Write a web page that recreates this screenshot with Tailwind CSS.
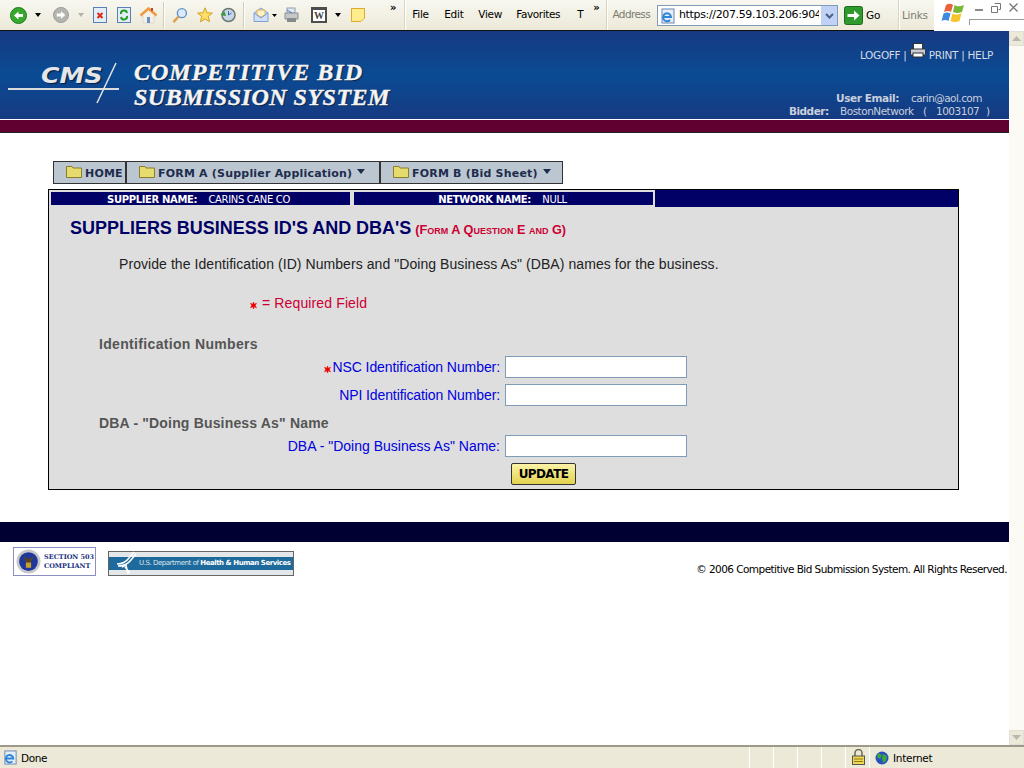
<!DOCTYPE html>
<html><head><meta charset="utf-8"><title>Competitive Bid Submission System</title>
<script src="https://cdn.jsdelivr.net/npm/@tailwindcss/browser@4"></script></head>
<body class="w-[1024px] h-[768px] overflow-hidden bg-white font-['Liberation_Sans',sans-serif]">
<div class="flex flex-col h-[768px]">
<!-- toolbar -->
<div class="h-[31px] shrink-0 flex items-center bg-[linear-gradient(180deg,#f8f7f0,#ece9d8)] border-b border-[#111] relative font-['DejaVu_Sans',sans-serif] text-[10.5px] text-black tracking-[-0.25px]">
  <svg class="ml-[10px]" width="17" height="17" viewBox="0 0 17 17"><circle cx="8.5" cy="8.5" r="8" fill="#39a82f" stroke="#1f7a1d"/><path d="M4 8.5 8.5 4.5V7H13V10H8.5V12.5Z" fill="#fff"/></svg>
  <svg class="ml-[8px]" width="6" height="4"><path d="M0 0H6L3 4Z" fill="#000"/></svg>
  <svg class="ml-[12px]" width="16" height="16" viewBox="0 0 17 17"><circle cx="8.5" cy="8.5" r="8" fill="#b5b5b0" stroke="#999"/><path d="M13 8.5 8.5 4.5V7H4V10H8.5V12.5Z" fill="#fff"/></svg>
  <svg class="ml-[9px]" width="6" height="4"><path d="M0 0H6L3 4Z" fill="#b4b4ac"/></svg>
  <svg class="ml-[9px]" width="14" height="16" viewBox="0 0 14 16"><rect x=".5" y=".5" width="13" height="15" fill="#e4edfa" stroke="#5a7fb5"/><path d="M4.5 6 9.5 11M9.5 6 4.5 11" stroke="#e02b14" stroke-width="2"/></svg>
  <svg class="ml-[10px]" width="14" height="16" viewBox="0 0 14 16"><rect x=".5" y=".5" width="13" height="15" fill="#e4edfa" stroke="#5a7fb5"/><path d="M4 7A3 3 0 0 1 10 6M10 9A3 3 0 0 1 4 10" stroke="#24a024" stroke-width="2" fill="none"/></svg>
  <svg class="ml-[9px]" width="17" height="17" viewBox="0 0 17 17"><path d="M1 8 8.5 1.5 16 8V9H14V16H3V9H1Z" fill="#f3f0e8" stroke="#c9c6c0" stroke-width=".5"/><path d="M.5 8.5 8.5 1.5 16.5 8.5" fill="none" stroke="#ef9a3c" stroke-width="2.5"/><rect x="7" y="10" width="3" height="6" fill="#6d8fc5"/><rect x="11" y="1" width="2" height="3" fill="#c8452c"/></svg>
  <div class="ml-[6px] w-[2px] h-[26px] bg-[#cfccb8] border-r border-white"></div>
  <svg class="ml-[7px]" width="16" height="17" viewBox="0 0 17 17"><circle cx="10.5" cy="6" r="4.8" fill="#dceafa" stroke="#5f93c9" stroke-width="1.5"/><path d="M7 9.5 1.5 15.5" stroke="#d8a04a" stroke-width="2.5"/></svg>
  <svg class="ml-[9px]" width="16" height="16" viewBox="0 0 16 16"><path d="M8 .8 10 5.8 15.4 6.1 11.2 9.4 12.6 14.8 8 11.9 3.4 14.8 4.8 9.4.6 6.1 6 5.8Z" fill="#ffe066" stroke="#d6a21e"/></svg>
  <svg class="ml-[7px]" width="16" height="16" viewBox="0 0 16 16"><circle cx="8.5" cy="8" r="6.5" fill="#c8d6e6" stroke="#6b7a73" stroke-width="1.5"/><path d="M8.5 4V8L11.5 6" stroke="#2f6db0" fill="none"/><path d="M.5 8 4.5 4.5 6 9Z" fill="#2e9a35"/></svg>
  <div class="ml-[7px] w-[2px] h-[26px] bg-[#cfccb8] border-r border-white"></div>
  <svg class="ml-[8px]" width="16" height="16" viewBox="0 0 16 16"><path d="M1 6 8 1 15 6V14.5H1Z" fill="#cfe0fa" stroke="#7e9fd6"/><path d="M4 3H12V8L8 10 4 8Z" fill="#fff3c4" stroke="#e0b060"/><path d="M1 6 8 11 15 6" fill="none" stroke="#7e9fd6"/></svg>
  <svg class="ml-[3px] mt-[1px]" width="5" height="3"><path d="M0 0H5L2.5 3Z" fill="#000"/></svg>
  <svg class="ml-[7px]" width="15" height="16" viewBox="0 0 15 16"><rect x="3" y="1" width="8" height="5" fill="#dfe7f4" stroke="#8ea0b8"/><path d="M1 6H14V12H1Z" fill="#c4c8c8" stroke="#8a8f90"/><rect x="3" y="11" width="9" height="4" fill="#858a8a"/><path d="M3 3 8 6" stroke="#5c7fb0"/></svg>
  <div class="ml-[12px] w-[16px] h-[16px] bg-[#4d4d4d] flex items-center justify-center"><span class="w-[12px] h-[11px] bg-white text-[10px] leading-[11px] font-bold text-center text-[#444] font-['Liberation_Serif',serif] tracking-normal">W</span></div>
  <svg class="ml-[8px]" width="6" height="4"><path d="M0 0H6L3 4Z" fill="#000"/></svg>
  <svg class="ml-[10px]" width="14" height="14" viewBox="0 0 14 14"><path d="M.5.5H13.5V10L10 13.5H.5Z" fill="#ffed8c" stroke="#e0a92c"/></svg>
  <span class="ml-[25px] mb-[15px] text-[10px] font-bold leading-none">&#187;</span>
  <div class="ml-[8px] w-[2px] h-[30px] bg-[#d8d5c2] border-r border-white"></div>
  <span class="ml-[6px] w-[32px]">File</span><span class="w-[34px]">Edit</span><span class="w-[38px]">View</span><span class="w-[61px] tracking-[-0.4px]">Favorites</span><span class="w-[16px]">T</span>
  <span class="mb-[15px] text-[10px] font-bold leading-none">&#187;</span>
  <div class="ml-[7px] w-[2px] h-[30px] bg-[#d8d5c2] border-r border-white"></div>
  <span class="ml-[4px] text-[#7d7d72] tracking-[-0.6px]">Address</span>
  <div class="absolute left-[657px] top-[5px] w-[181px] h-[21px] bg-white border border-[#7f9db9] flex items-center overflow-hidden">
    <svg class="ml-[2px] shrink-0" width="16" height="16" viewBox="0 0 16 16"><rect x="2" y="1" width="12" height="14" fill="#e6eefa" stroke="#6d84b0"/><path d="M3.5 9H11A4 4 0 1 0 10 12" stroke="#2f86d6" stroke-width="2" fill="none"/></svg>
    <span class="ml-[3px] w-[140px] overflow-hidden whitespace-nowrap text-[11px] tracking-[-0.35px]">https://207.59.103.206:9045</span>
    <div class="absolute right-0 top-0 w-[16px] h-[19px] bg-[#c1d2f7] flex items-center justify-center"><svg width="9" height="6" viewBox="0 0 9 6"><path d="M1 1 4.5 4.5 8 1" stroke="#4d6185" stroke-width="2" fill="none"/></svg></div>
  </div>
  <svg class="absolute left-[844px] top-[6px]" width="19" height="19" viewBox="0 0 19 19"><rect x=".5" y=".5" width="18" height="18" rx="2" fill="#2f9a2c" stroke="#1c6e1c"/><path d="M3.5 8H10V4.5L15.5 9.5 10 14.500V11H3.500Z" fill="#fff"/></svg>
  <span class="absolute left-[866px] top-[8px]">Go</span>
  <div class="absolute left-[898px] top-0 w-[2px] h-[30px] bg-[#d8d5c2] border-r border-white"></div>
  <span class="absolute left-[902px] top-[8px] text-[#7d7d72]">Links</span>
  <div class="absolute left-[934px] top-0 w-[90px] h-[31px] bg-white">
    <svg class="absolute left-[7px] top-[2px]" width="25" height="22" viewBox="0 0 25 22"><path d="M5 3Q9 .5 12 3L10 10Q7 8 3 10Z" fill="#e8613a"/><path d="M13.500 3Q17 5.500 23 3L21 10Q16 12 12 10Z" fill="#7ab833"/><path d="M2.500 11.500Q6 9.500 9.500 11.500L7.500 19Q4 17 .5 19Z" fill="#3d8ae0"/><path d="M11.500 11.500Q15 13.500 20.500 11.500L18.500 19Q14 21 9.500 19Z" fill="#f7c32c"/></svg>
    <div class="absolute left-[41px] top-[9px] w-[8px] h-[2px] bg-[#8a8a8a]"></div>
    <svg class="absolute left-[57px] top-[3px]" width="10" height="10" viewBox="0 0 10 10"><path d="M3.500.5H9.500V6.500H7.500M.5 3.500H6.500V9.500H.5Z" fill="none" stroke="#777"/></svg>
    <svg class="absolute left-[75px] top-[3px]" width="9" height="9" viewBox="0 0 9 9"><path d="M.5.5 8.500 8.500M8.500.5 .5 8.500" stroke="#777" stroke-width="1.300"/></svg>
    <div class="absolute left-[35px] top-[19px] w-[55px] h-[6px] border-l border-t border-[#999] bg-white"></div>
  </div>
</div>
<div class="flex flex-1 min-h-0">
<!-- page -->
<div class="w-[1009px] shrink-0 flex flex-col">
  <header class="h-[88px] shrink-0 relative bg-[linear-gradient(180deg,#163a82,#0a4b93_50%,#163a82)]">
    <div class="absolute left-[8px] top-[31px] w-[112px] h-[42px]">
      <span class="absolute left-[33px] top-[0px] text-[21px] leading-[28px] font-bold italic text-[#e4e6ea] font-['DejaVu_Sans',sans-serif] scale-x-[1.2] origin-left [text-shadow:1px_1px_1px_#0a1c40]">CMS</span>
      <div class="absolute left-0 top-[26px] w-[111px] h-[2px] bg-[#dcdcdc]"></div>
      <svg class="absolute left-[85px] top-[0px]" width="26" height="42" viewBox="0 0 26 42"><path d="M23 1 4 41" stroke="#e4e4e4" stroke-width="1.500"/></svg>
    </div>
    <div class="absolute left-[134px] top-[29px] text-[24px] leading-[25px] font-bold italic text-[#f4f4f4] font-['Liberation_Serif',serif] [text-shadow:1px_1px_1px_#0a1c40] [-webkit-text-stroke:0.4px_#f4f4f4] whitespace-nowrap"><span class="tracking-[1px]">COMPETITIVE BID</span><br><span class="tracking-[0.5px]">SUBMISSION SYSTEM</span></div>
    <div class="absolute right-[16px] top-[17px] flex items-center text-[10.5px] text-[#d6dbe6] font-['DejaVu_Sans',sans-serif] tracking-[-0.3px] whitespace-nowrap">LOGOFF&nbsp;|&nbsp;
      <svg class="-translate-y-[5px]" width="16" height="15" viewBox="0 0 16 15"><rect x="3.500" y=".5" width="9" height="6" fill="#fff" stroke="#333"/><rect x=".5" y="6" width="15" height="6" rx="1" fill="#c8ccd6" stroke="#333"/><rect x="3" y="10" width="10" height="4" fill="#fff" stroke="#333"/></svg>
      &nbsp;PRINT&nbsp;|&nbsp;HELP</div>
    <div class="absolute left-[836px] top-[61px] text-[10.5px] leading-[13px] text-[#c9cfdd] font-['DejaVu_Sans',sans-serif] tracking-[-0.4px] whitespace-nowrap"><b>User Email:</b><span class="ml-[12px] tracking-[-0.55px]">carin@aol.com</span></div>
    <div class="absolute left-[789px] top-[74px] flex text-[10.5px] leading-[13px] text-[#c9cfdd] font-['DejaVu_Sans',sans-serif] tracking-[-0.5px] whitespace-nowrap"><b class="w-[51px]">Bidder:</b><span class="w-[83px]">BostonNetwork</span><span class="w-[13px]">(</span><span class="w-[50px]">1003107</span><span>)</span></div>
  </header>
  <div class="h-px bg-white shrink-0"></div>
  <div class="h-[13px] bg-[#600030] border-b border-[#222] shrink-0"></div>
  <!-- menu -->
  <nav class="ml-[53px] mt-[28px] w-[510px] h-[23px] shrink-0 flex bg-[#bcc6d0] border border-[#333] font-['DejaVu_Sans',sans-serif] text-[11px] font-bold text-[#1c2d4d] tracking-[0.2px]">
    <div class="w-[73px] flex items-center border-r-2 border-[#333]"><svg class="ml-[12px] mr-[3px] mb-[2px]" width="16" height="13" viewBox="0 0 16 13"><path d="M.5 12.500V1.500H6L7 3H15.500V12.500Z" fill="#e6dc6e" stroke="#8a7d2c"/></svg><span class="mt-[4px]">HOME</span></div>
    <div class="w-[254px] flex items-center border-r-2 border-[#333]"><svg class="ml-[12px] mr-[3px] mb-[2px]" width="16" height="13" viewBox="0 0 16 13"><path d="M.5 12.500V1.500H6L7 3H15.500V12.500Z" fill="#e6dc6e" stroke="#8a7d2c"/></svg><span class="mt-[4px]">FORM A (Supplier Application)</span><svg class="ml-[5px] mb-[2px]" width="8" height="5"><path d="M0 0H8L4 5Z" fill="#1c2d4d"/></svg></div>
    <div class="flex items-center"><svg class="ml-[12px] mr-[3px] mb-[2px]" width="16" height="13" viewBox="0 0 16 13"><path d="M.5 12.500V1.500H6L7 3H15.500V12.500Z" fill="#e6dc6e" stroke="#8a7d2c"/></svg><span class="mt-[4px]">FORM B (Bid Sheet)</span><svg class="ml-[5px] mb-[2px]" width="8" height="5"><path d="M0 0H8L4 5Z" fill="#1c2d4d"/></svg></div>
  </nav>
  <!-- panel -->
  <main class="ml-[48px] mt-[5px] w-[911px] h-[301px] shrink-0 bg-[#dedede] border border-black">
    <div class="h-[17px] flex items-start text-[10px] text-white font-['DejaVu_Sans',sans-serif] tracking-[-0.35px] leading-[15px] whitespace-pre">
      <div class="ml-[2px] mt-[2px] w-[299px] h-[13px] bg-[#000066] text-center pr-[4px]"><b>SUPPLIER NAME:</b>    CARINS CANE CO</div>
      <div class="ml-[4px] mt-[2px] w-[299px] h-[13px] bg-[#000066] text-center pr-[2px]"><b>NETWORK NAME:</b>    NULL</div>
      <div class="ml-[2px] flex-1 h-[17px] bg-[#000066]"></div>
    </div>
    <h1 class="ml-[21px] mt-[10px] h-[22px] flex items-baseline whitespace-nowrap"><span class="text-[18px] leading-[22px] font-bold text-[#000066] tracking-[-0.02px]">SUPPLIERS BUSINESS ID'S AND DBA'S</span><span class="ml-[4px] text-[12.7px] font-bold text-[#cc0033] [font-variant:small-caps]">(Form A Question E and G)</span></h1>
    <p class="ml-[70px] mt-[17px] text-[14px] leading-[17px] text-[#222] tracking-[0.065px]">Provide the Identification (ID) Numbers and "Doing Business As" (DBA) names for the business.</p>
    <p class="ml-[201px] mt-[21px] text-[14px] leading-[18px] text-[#cc0033] tracking-[0.13px] flex items-center"><svg class="mr-[5px] mt-[5px]" width="7" height="7" viewBox="0 0 7 7"><path d="M3.500 0 4.300 2.200 6.500 1.200 5.300 3.500 6.500 5.800 4.300 4.800 3.500 7 2.700 4.800.5 5.800 1.700 3.500.5 1.200 2.700 2.200Z" fill="#ee0000" stroke="#ee0000" stroke-width=".5"/></svg>= Required Field</p>
    <h2 class="ml-[50px] mt-[24px] h-[17px] text-[14px] leading-[17px] font-bold text-[#555] tracking-[0.33px]">Identification Numbers</h2>
    <div class="mt-[3px] h-[22px] flex items-center justify-end w-[638px]"><label class="text-[14px] text-[#0000e0] mr-[5px] flex items-center tracking-[-0.08px]"><svg class="mr-[1px] mt-[5px]" width="7" height="7" viewBox="0 0 7 7"><path d="M3.500 0 4.300 2.200 6.500 1.200 5.300 3.500 6.500 5.800 4.300 4.800 3.500 7 2.700 4.800.5 5.800 1.700 3.500.5 1.200 2.700 2.200Z" fill="#ee0000" stroke="#ee0000" stroke-width=".5"/></svg>NSC Identification Number:</label><input class="w-[182px] h-[22px] bg-white border border-[#7f9db9]"></div>
    <div class="mt-[6px] h-[22px] flex items-center justify-end w-[638px]"><label class="text-[14px] text-[#0000e0] mr-[5px] tracking-[-0.1px]">NPI Identification Number:</label><input class="w-[182px] h-[22px] bg-white border border-[#7f9db9]"></div>
    <h2 class="ml-[50px] mt-[9px] h-[17px] text-[14px] leading-[17px] font-bold text-[#555] tracking-[0.17px]">DBA - "Doing Business As" Name</h2>
    <div class="mt-[3px] h-[22px] flex items-center justify-end w-[638px]"><label class="text-[14px] text-[#0000e0] mr-[5px]">DBA - "Doing Business As" Name:</label><input class="w-[182px] h-[22px] bg-white border border-[#7f9db9]"></div>
    <button class="block ml-[462px] mt-[6px] w-[65px] h-[22px] rounded-[2px] border border-[#333] bg-[linear-gradient(180deg,#fbf3a8,#e2d24e)] text-[12px] font-bold text-black font-['DejaVu_Sans',sans-serif] tracking-[-0.6px]">UPDATE</button>
  </main>
  <div class="mt-[32px] h-[20px] shrink-0 bg-[#000033]"></div>
  <footer class="relative flex-1">
    <div class="absolute left-[13px] top-[5px] w-[83px] h-[29px] border border-[#8a8fc0] bg-white flex items-center">
      <svg class="ml-[2px]" width="25" height="25" viewBox="0 0 24 24"><circle cx="12" cy="12" r="11.500" fill="#c8c8cc"/><circle cx="12" cy="12" r="9" fill="#20389a"/><path d="M7 7 12 10 17 7 14 14H10Z" fill="#5a4420"/><rect x="9.500" y="13" width="5" height="5" fill="#c8a030"/></svg>
      <div class="ml-[3px] text-[6.5px] leading-[9px] font-bold text-[#203080] font-['DejaVu_Serif',serif] whitespace-nowrap">SECTION 503<br>COMPLIANT</div>
    </div>
    <div class="absolute left-[108px] top-[9px] w-[186px] h-[25px] border border-[#666] bg-[#e4e7ea] flex items-center">
      <div class="w-full h-[13px] bg-[#1f6a9c] flex items-center relative">
        <svg class="absolute left-[7px] top-[-6px]" width="22" height="24" viewBox="0 0 22 24"><path d="M1 13C7 13 10 11 13 7L18 1M2 15C8 15 12 13 15 9L20 3M6 16 10 14 12 23M9 16 14 22" stroke="#fff" stroke-width="1.500" fill="none"/></svg>
        <span class="ml-[30px] text-[7px] text-[#dbe6ee] whitespace-nowrap font-['DejaVu_Sans',sans-serif] tracking-[-0.45px]">U.S. Department of <b class="text-white">Health &amp; Human Services</b></span>
      </div>
    </div>
    <p class="absolute right-[2px] top-[20px] text-[10.5px] text-black font-['DejaVu_Sans',sans-serif] tracking-[-0.56px] whitespace-nowrap">© 2006 Competitive Bid Submission System. All Rights Reserved.</p>
  </footer>
</div>
<!-- scrollbar -->
<div class="w-[15px] bg-[#fbfaf5] flex flex-col justify-between">
  <div class="h-[15px] bg-[#ece9d8] border border-[#e0e0d8] flex items-center justify-center"><svg width="9" height="5"><path d="M0 5 4.500 0 9 5Z" fill="#b8b8b0"/></svg></div>
  <div class="h-[15px] bg-[#ece9d8] border border-[#e0e0d8] flex items-center justify-center"><svg width="9" height="5"><path d="M0 0 4.500 5 9 0Z" fill="#b8b8b0"/></svg></div>
</div>
</div>
<!-- status bar -->
<div class="h-[23px] shrink-0 border-t-2 border-[#9d9a89] bg-[#ece9d8] flex items-center relative font-['DejaVu_Sans',sans-serif] text-[10.5px] tracking-[-0.4px] text-black">
  <svg class="ml-[3px]" width="15" height="15" viewBox="0 0 16 16"><rect x="2" y="1" width="12" height="14" fill="#e6eefa" stroke="#6d84b0"/><path d="M3.500 9H11A4 4 0 1 0 10 12" stroke="#2f86d6" stroke-width="2" fill="none"/></svg>
  <span class="ml-[3px] mt-[2px]">Done</span>
  <div class="absolute left-[749px] top-[0px] h-[21px] flex">
    <i class="w-[24px] border-l border-white"></i><i class="w-[24px] border-l border-white"></i><i class="w-[24px] border-l border-white"></i><i class="w-[24px] border-l border-white"></i><i class="w-[24px] border-l border-white"></i><i class="w-[24px] border-l border-white"></i>
  </div>
  <svg class="absolute left-[852px] top-[2px]" width="13" height="16" viewBox="0 0 13 16"><path d="M3 7V4A3.500 3.500 0 0 1 10 4V7" stroke="#6b6b4a" stroke-width="1.500" fill="none"/><rect x=".5" y="7" width="12" height="8.500" fill="#f0d850" stroke="#555"/><path d="M2 10H11M2 12.500H11" stroke="#8a7a20"/></svg>
  <svg class="absolute left-[875px] top-[4px]" width="14" height="14" viewBox="0 0 14 14"><circle cx="7" cy="7" r="6.500" fill="#2a4fc0"/><path d="M3 2 7 4 5 8 2 6ZM8 3 12 5 11 10 8 12 7 7Z" fill="#3aa83a"/></svg>
  <span class="absolute left-[893px] top-[4px] tracking-[-0.3px]">Internet</span>
</div>
</div>
</body></html>
